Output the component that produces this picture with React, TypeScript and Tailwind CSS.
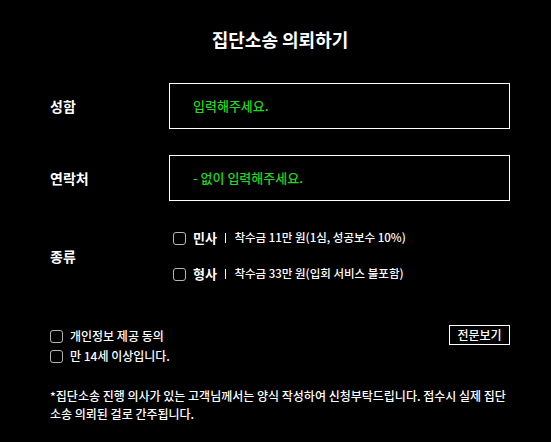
import { useState } from "react";

function Box({ checked, onToggle }: { checked: boolean; onToggle: () => void }) {
    return (
        <button
            type="button"
            onClick={onToggle}
            className="flex h-[13px] w-[13px] shrink-0 items-center justify-center rounded-[3px] border border-[#b5b5b5] bg-black"
        >
            {checked && <span className="h-[7px] w-[7px] bg-white" />}
        </button>
    );
}

export default function App() {
    const [checks, setChecks] = useState<Record<string, boolean>>({});
    const toggle = (key: string) =>
        setChecks((prev) => ({ ...prev, [key]: !prev[key] }));

    return (
        <div className="min-h-screen bg-black text-white font-medium font-['Noto_Sans_CJK_KR',sans-serif]">
            <div className="ml-[50px] w-[460px] pt-[26px]">
                <h1 className="text-center text-[18px] font-bold leading-[26px]">
                    집단소송 의뢰하기
                </h1>

                {/* 성함 */}
                <div className="mt-[31px] flex items-center">
                    <div className="w-[119px] text-[14px] font-bold">성함</div>
                    <div className="flex h-[46px] flex-1 items-center border border-white pl-[23px] text-[13px] text-[#22d622]">
                        입력해주세요.
                    </div>
                </div>

                {/* 연락처 */}
                <div className="mt-[26px] flex items-center">
                    <div className="w-[119px] text-[14px] font-bold">연락처</div>
                    <div className="flex h-[46px] flex-1 items-center border border-white pl-[23px] text-[13px] text-[#22d622]">
                        - 없이 입력해주세요.
                    </div>
                </div>

                {/* 종류 */}
                <div className="mt-[28px] flex items-center">
                    <div className="w-[123px] text-[14px] font-bold">종류</div>
                    <div className="flex flex-col gap-[18px]">
                        <div className="flex h-[18px] items-center text-[11.5px]">
                            <Box checked={!!checks.civil} onToggle={() => toggle("civil")} />
                            <span className="ml-[7px] text-[13px] font-bold">민사</span>
                            <span className="ml-[8px] mr-[8px] h-[10px] w-[1.5px] bg-white" />
                            <span>착수금 11만 원(1심, 성공보수 10%)</span>
                        </div>
                        <div className="flex h-[18px] items-center text-[11.5px]">
                            <Box checked={!!checks.criminal} onToggle={() => toggle("criminal")} />
                            <span className="ml-[7px] text-[13px] font-bold">형사</span>
                            <span className="ml-[8px] mr-[8px] h-[10px] w-[1.5px] bg-white" />
                            <span>착수금 33만 원(입회 서비스 불포함)</span>
                        </div>
                    </div>
                </div>

                {/* 동의 */}
                <div className="mt-[42px] flex items-start justify-between">
                    <div className="flex flex-col gap-[2px] pt-[2px]">
                        <label className="flex h-[18px] items-center gap-[7px] text-[12px]">
                            <Box checked={!!checks.privacy} onToggle={() => toggle("privacy")} />
                            개인정보 제공 동의
                        </label>
                        <label className="flex h-[18px] items-center gap-[7px] text-[12px]">
                            <Box checked={!!checks.age} onToggle={() => toggle("age")} />
                            만 14세 이상입니다.
                        </label>
                    </div>
                    <button className="flex h-[20px] w-[61px] items-center justify-center border border-white text-[12px]">
                        전문보기
                    </button>
                </div>

                <p className="mt-[22px] text-[12px] leading-[18px]">
                    *집단소송 진행 의사가 있는 고객님께서는 양식 작성하여 신청부탁드립니다. 접수시 실제 집단 소송 의뢰된 걸로 간주됩니다.
                </p>
            </div>
        </div>
    );
}
